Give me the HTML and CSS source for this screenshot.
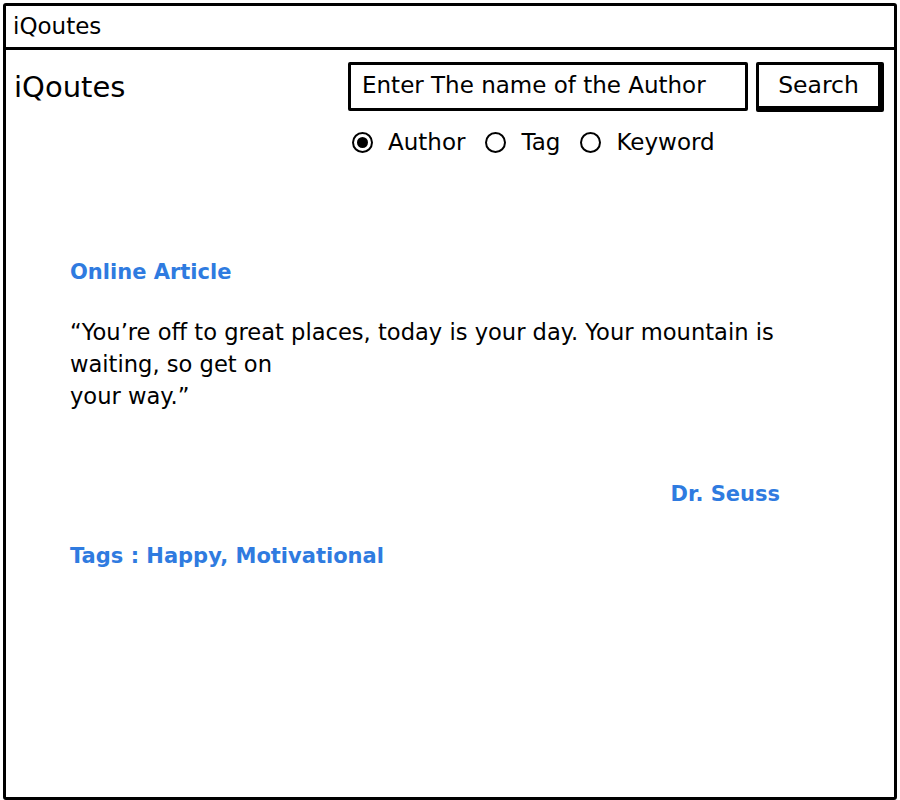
FILE: index.html
```html
<!DOCTYPE html>
<html>
<head>
<meta charset="utf-8">
<link rel="stylesheet" href="styles.css">
</head>
<body>
<div class="window">
  <div class="titlebar">iQoutes</div>
  <div class="content">
    <div class="header">
      <div class="brand">iQoutes</div>
      <div class="search-area">
        <div class="search-row">
          <div class="input">Enter The name of the Author</div>
          <div class="button">Search</div>
        </div>
        <div class="radios">
          <span class="radio checked"></span><span class="label">Author</span>
          <span class="radio"></span><span class="label">Tag</span>
          <span class="radio"></span><span class="label">Keyword</span>
        </div>
      </div>
    </div>
    <div class="article">
      <div class="source">Online Article</div>
      <p class="quote">“You’re off to great places, today is your day. Your mountain is waiting, so get on<br>your way.”</p>
      <div class="author">Dr. Seuss</div>
      <div class="tags">Tags : Happy, Motivational</div>
    </div>
  </div>
</div>
</body>
</html>
```
FILE: styles.css
```css
html, body {
  margin: 0;
  padding: 0;
  background: #fff;
}
body {
  font-family: "DejaVu Sans", "Open Sans", sans-serif;
  color: #000;
}
.window {
  box-sizing: border-box;
  margin: 3px 3px 0 3px;
  height: 797px;
  border: 3px solid #000;
  border-radius: 3px;
  display: flex;
  flex-direction: column;
}
.titlebar {
  height: 41px;
  border-bottom: 3px solid #000;
  font-size: 23px;
  line-height: 41px;
  padding-left: 7px;
}
.content {
  flex: 1;
}
.header {
  display: flex;
  justify-content: space-between;
  padding: 12px 10px 0 8px;
}
.brand {
  font-size: 29px;
  padding-top: 8px;
}
.search-area {
  display: flex;
  flex-direction: column;
}
.search-row {
  display: flex;
  gap: 8px;
}
.input {
  box-sizing: border-box;
  width: 400px;
  height: 49px;
  border: 3px solid #000;
  border-radius: 2px;
  font-size: 23px;
  line-height: 41px;
  padding-left: 11px;
}
.button {
  box-sizing: border-box;
  width: 128px;
  height: 50px;
  border: 3px solid #000;
  border-right-width: 6px;
  border-bottom-width: 6px;
  border-radius: 2px;
  font-size: 23.5px;
  line-height: 40px;
  text-align: center;
}
.radios {
  display: flex;
  align-items: center;
  margin-top: 17px;
  padding-left: 4px;
  font-size: 23px;
}
.radio {
  box-sizing: border-box;
  width: 21px;
  height: 21px;
  border: 2px solid #000;
  border-radius: 50%;
  position: relative;
  margin-right: 15px;
}
.radio.checked::after {
  content: "";
  position: absolute;
  left: 3px;
  top: 3px;
  width: 11px;
  height: 11px;
  border-radius: 50%;
  background: #000;
}
.label {
  margin-right: 20px;
}
.article {
  padding: 105px 0 0 64px;
  width: 710px;
}
.source {
  color: #2f7be0;
  font-weight: 700;
  font-size: 21px;
}
.quote {
  margin: 32px 0 0 0;
  font-size: 22.6px;
  line-height: 32px;
}
.author {
  color: #2f7be0;
  font-weight: 700;
  font-size: 21px;
  text-align: right;
  margin-top: 70px;
}
.tags {
  color: #2f7be0;
  font-weight: 700;
  font-size: 21px;
  margin-top: 38px;
}
```
